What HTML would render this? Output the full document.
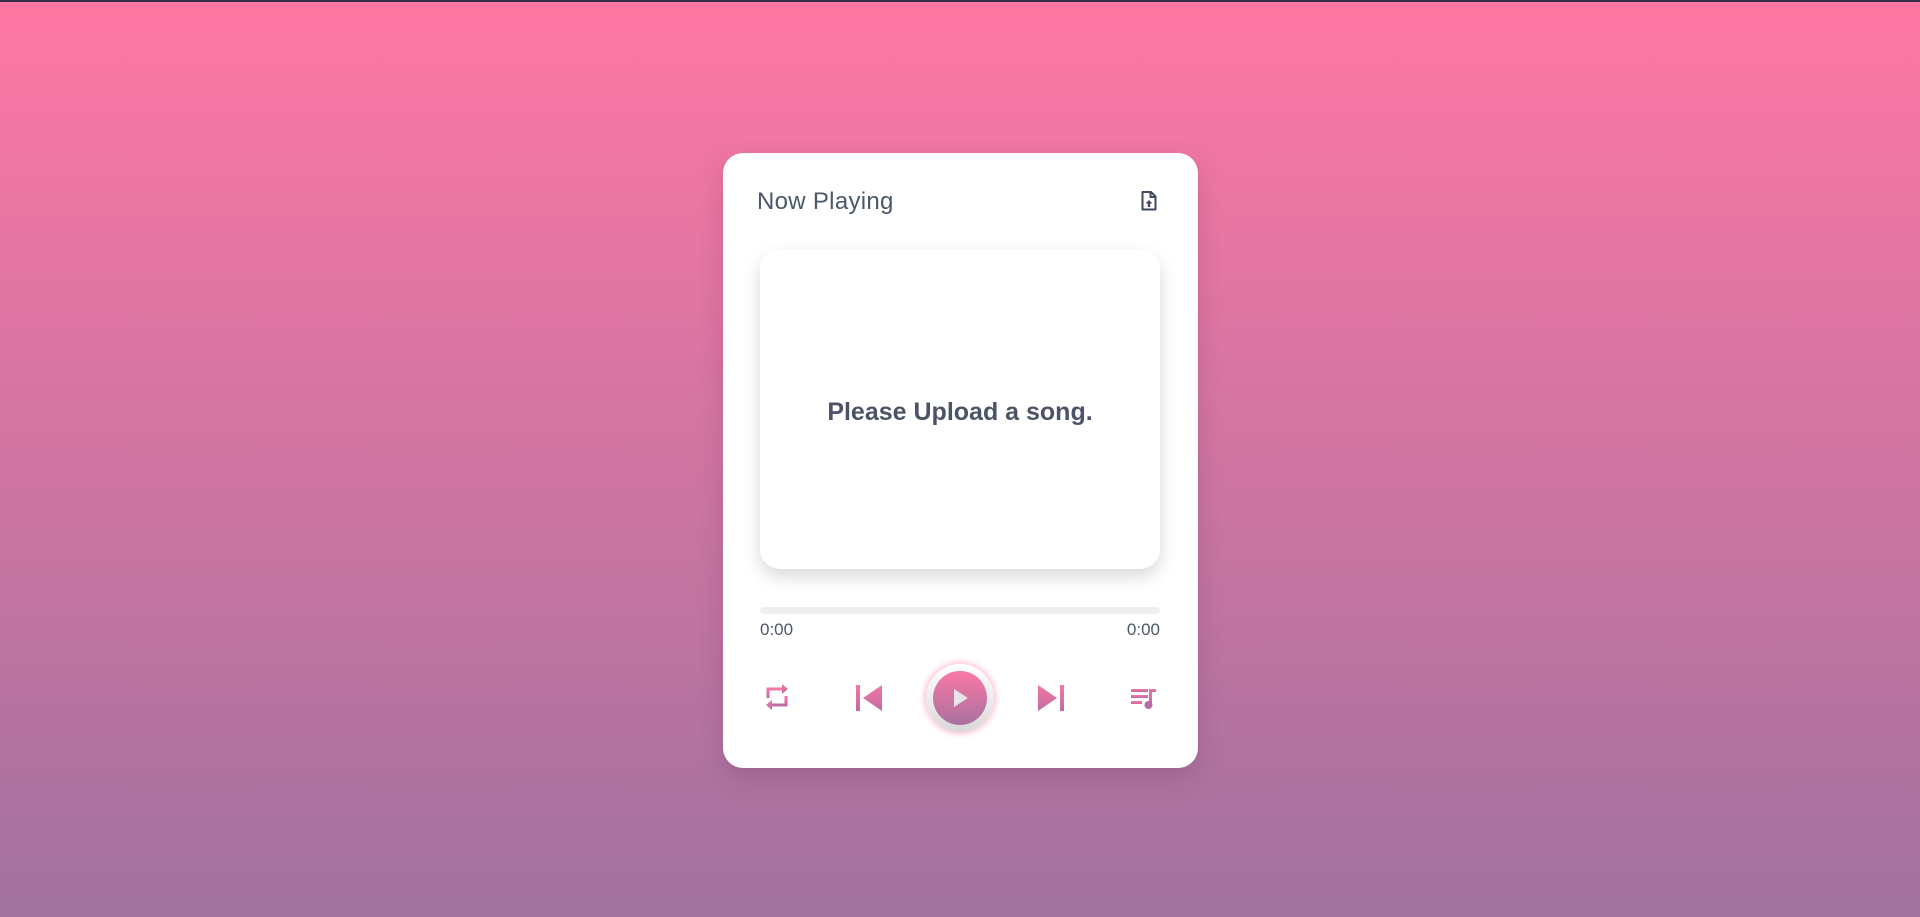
<!DOCTYPE html>
<html><head><meta charset="utf-8"><style>
html,body{margin:0;padding:0}
body{width:1920px;height:917px;overflow:hidden;background:linear-gradient(#ff77a3,#a1729f);font-family:"Liberation Sans",sans-serif;position:relative}
.top{position:absolute;left:0;top:0;width:1920px;height:2px;background:#2d3345}
.card{position:absolute;left:723px;top:153px;width:475px;height:615px;background:#fff;border-radius:20px;box-shadow:0 10px 25px rgba(80,40,80,.2)}
.title{position:absolute;left:34px;top:35px;font-size:24px;letter-spacing:0.3px;color:#4b5869}
.up{position:absolute;left:418px;top:38px}
.art{position:absolute;left:37px;top:96px;width:400px;height:320px;border-radius:20px;background:#fff;box-shadow:0 8px 18px rgba(0,0,0,.15)}
.art span{position:absolute;left:0;right:0;top:149px;text-align:center;font-weight:bold;font-size:25px;color:#4b5366}
.bar{position:absolute;left:37px;top:454px;width:400px;height:7px;border-radius:4px;background:#efefef}
.t{position:absolute;top:467px;font-size:17px;color:#4b5869}
.ic{position:absolute}
.play{position:absolute;left:203px;top:511px;width:68px;height:68px;border-radius:50%;background:linear-gradient(#fff,#d9d9d9);box-shadow:0 0 6px 2px rgba(255,120,160,.45)}
.play .in{position:absolute;left:7px;top:7px;width:54px;height:54px;border-radius:50%;background:linear-gradient(#fb77a4,#a8729f)}
</style></head><body>
<div class="top"></div>
<div class="card">
<div class="title">Now Playing</div>
<svg class="up" width="16" height="20" viewBox="0 0 16 20"><path d="M1.5 1h8.5l4.5 4.5v13h-13z" fill="none" stroke="#3e4a5c" stroke-width="2" stroke-linejoin="round"/><path d="M9.5 1v5h5" fill="none" stroke="#3e4a5c" stroke-width="2"/><path d="M8 9l-3.5 3.5h2.3v3.5h2.4v-3.5h2.3z" fill="#3e4a5c"/></svg>
<div class="art"><span>Please Upload a song.</span></div>
<div class="bar"></div>
<div class="t" style="left:37px">0:00</div>
<div class="t" style="right:38px">0:00</div>
<svg class="ic" style="left:40px;top:528px" width="28" height="32" viewBox="0 0 28 32"><defs><linearGradient id="g" x1="0" y1="0" x2="0" y2="1"><stop offset="0" stop-color="#f477a5"/><stop offset="1" stop-color="#c06ca2"/></linearGradient></defs><path d="M5 17v-9h15" fill="none" stroke="url(#g)" stroke-width="3"/><path d="M19 3l6 5-6 5z" fill="url(#g)"/><path d="M23 15v9h-15" fill="none" stroke="url(#g)" stroke-width="3"/><path d="M9 19l-6 5 6 5z" fill="url(#g)"/></svg>
<svg class="ic" style="left:132px;top:531px" width="28" height="28" viewBox="0 0 28 28"><rect x="1" y="1" width="4" height="26" fill="url(#g)"/><path d="M27 1v26L8 14z" fill="url(#g)"/></svg>
<div class="play"><div class="in"><svg style="position:absolute;left:20px;top:17px" width="16" height="20" viewBox="0 0 16 20"><path d="M1 1l14 9L1 19z" fill="#e8e4ea"/></svg></div></div>
<svg class="ic" style="left:314px;top:531px" width="28" height="28" viewBox="0 0 28 28"><rect x="23" y="1" width="4" height="26" fill="url(#g)"/><path d="M1 1v26L20 14z" fill="url(#g)"/></svg>
<svg class="ic" style="left:407px;top:533px" width="28" height="24" viewBox="0 0 28 24"><rect x="1" y="3" width="17" height="3" fill="url(#g)"/><rect x="1" y="9" width="17" height="3" fill="url(#g)"/><rect x="1" y="15" width="11" height="3" fill="url(#g)"/><rect x="19" y="3" width="3" height="16" fill="url(#g)"/><rect x="19" y="3" width="7" height="3" fill="url(#g)"/><circle cx="18.5" cy="19" r="4" fill="#b56ca0"/></svg>
</div>
</body></html>
